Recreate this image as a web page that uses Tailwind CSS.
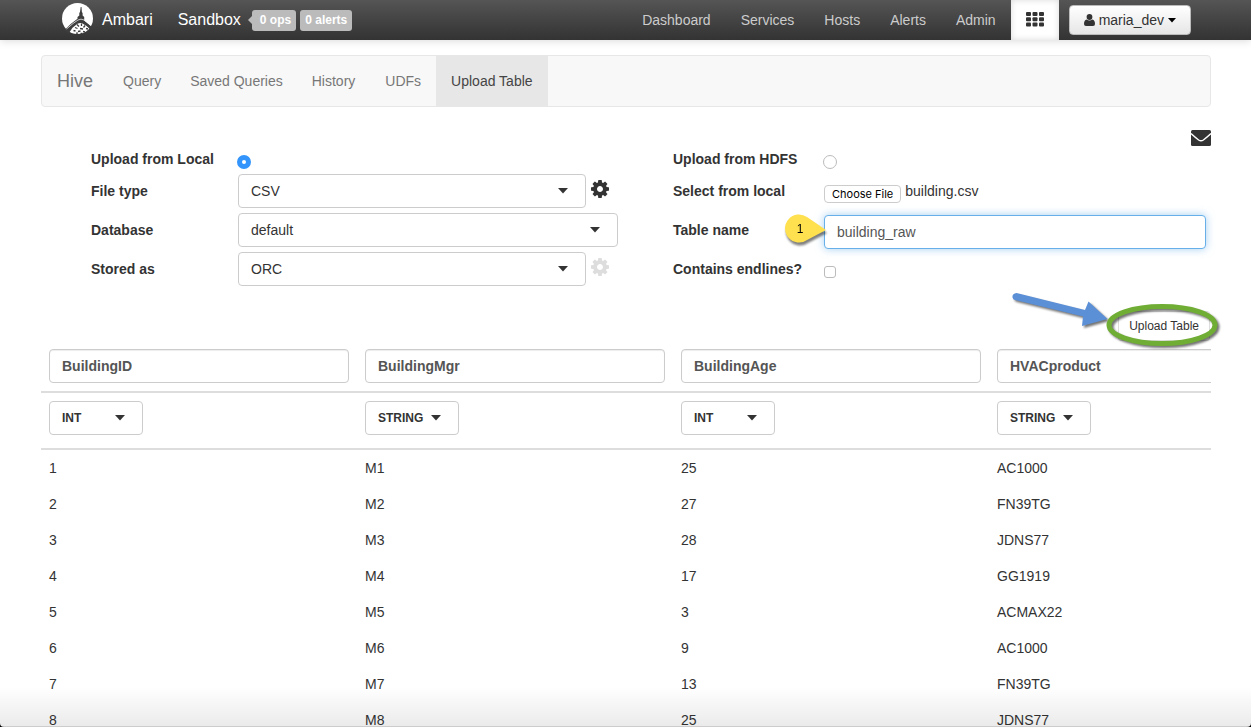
<!DOCTYPE html>
<html lang="en">
<head>
<meta charset="utf-8">
<meta name="viewport" content="width=device-width, initial-scale=1">
<title>Ambari - Hive - Upload Table</title>
<script src="https://cdn.jsdelivr.net/npm/@tailwindcss/browser@4"></script>
</head>
<body class="relative h-screen overflow-hidden bg-white font-['Liberation_Sans',Arial,sans-serif] text-sm leading-5 text-[#333]">
<svg class="hidden" aria-hidden="true">
  <symbol id="caret" viewBox="0 0 10 6"><path d="M0 0h10L5 5.5z" fill="currentColor"/></symbol>
  <symbol id="gear" viewBox="0 0 1536 1536"><path fill="currentColor" d="M1024 768q0-106-75-181t-181-75-181 75-75 181 75 181 181 75 181-75 75-181zm512-109v222q0 12-8 23t-20 13l-185 28q-19 54-39 91 35 50 107 138 10 12 10 25t-9 23q-27 37-99 108t-94 71q-12 0-26-9l-138-108q-44 23-91 38-16 136-29 186-7 28-36 28H657q-14 0-24.500-8.500T621 1506l-28-184q-49-16-90-37l-141 107q-10 9-25 9-14 0-25-11-126-114-165-168-7-10-7-23 0-12 8-23 15-21 51-66.500t54-70.500q-27-50-41-99L29 913q-13-2-21-12.500T0 877V655q0-12 8-23t19-13l186-28q14-46 39-92-40-57-107-138-10-12-10-24 0-10 9-23 26-36 98.500-107.500T337 135q13 0 26 10l138 107q44-23 91-38 16-136 29-186 7-28 36-28h222q14 0 24.500 8.500T915 30l28 184q49 16 90 37l142-107q9-9 24-9 13 0 25 10 129 119 165 170 7 8 7 22 0 12-8 23-15 21-51 66.500t-54 70.500q26 50 41 98l183 28q13 2 21 12.500t8 23.500z"/></symbol>
</svg>

<header class="flex h-10 items-center bg-linear-to-b from-[#555] to-[#333] pr-[60px] pl-[62px] shadow-[0_1px_8px_rgba(0,0,0,0.15)]">
  <a href="#" class="flex items-center gap-[9px] text-base text-white">
    <svg class="-mt-1 size-[31px]" viewBox="0 0 31 31" aria-hidden="true">
      <circle cx="15.500" cy="15.500" r="15.500" fill="#fff"/>
      <path fill="#3d3d3d" d="M18.700 4h.8l.4 5 .7 1v2.500l1.600 1.500v3.500l3 2.500 5 4.200-1.200 2.800-4.800-4.300-4.200-2.400q-2-.8-4.500.5l-5 4-4 6-4-3.800 6.500-6.200 6.500-5V14l1.800-1.500V10l.7-1z"/>
      <path d="M4.500 26l6.500-5.500 5-3.500q3-1.700 6 0l6.500 5" fill="none" stroke="#fff" stroke-width=".7"/>
      <g fill="none" stroke="#3d3d3d" stroke-width="1.300">
        <path d="M15 21.500l2 2M19.500 20.500v2.500M23 22.500l-1.500 2M13 24.500l2.500 1M18 25.500l3 .5M24 25.500l2 .5M11.500 27.500l2 .5M16 28.500l2.500-.5M21 28.500l2 .5M14 30.200h2M18.500 30.500h2"/>
      </g>
    </svg>
    Ambari
  </a>
  <a href="#" class="ml-[25px] text-base text-white">Sandbox</a>
  <div class="ml-[7px] flex items-center gap-1 text-xs leading-5 font-bold text-white">
    <a href="#" class="flex items-center">
      <svg class="h-2 w-1" viewBox="0 0 4 8" aria-hidden="true"><path d="M4 0v8L0 4z" fill="#bbb"/></svg>
      <span class="h-[21px] rounded-[3px] bg-[#bbb] pr-[5px] pl-2">0 ops</span>
    </a>
    <a href="#" class="h-[21px] rounded-[3px] bg-[#bbb] px-[5px]">0 alerts</a>
  </div>
  <nav class="ml-auto flex items-center gap-[30px] text-[#ccc]">
    <a href="#">Dashboard</a>
    <a href="#">Services</a>
    <a href="#">Hosts</a>
    <a href="#">Alerts</a>
    <a href="#">Admin</a>
  </nav>
  <button type="button" aria-label="Views" class="ml-[15px] flex h-10 w-12 justify-center bg-white pt-3 text-[#333] shadow-[inset_0_0_6px_rgba(0,0,0,0.15)]">
    <svg class="h-[15px] w-[18px]" viewBox="0 0 18 15" fill="currentColor" aria-hidden="true">
      <rect width="5" height="4" rx="1"/><rect x="6.500" width="5" height="4" rx="1"/><rect x="13" width="5" height="4" rx="1"/>
      <rect y="5.300" width="5" height="4" rx="1"/><rect x="6.500" y="5.300" width="5" height="4" rx="1"/><rect x="13" y="5.300" width="5" height="4" rx="1"/>
      <rect y="10.600" width="5" height="4" rx="1"/><rect x="6.500" y="10.600" width="5" height="4" rx="1"/><rect x="13" y="10.600" width="5" height="4" rx="1"/>
    </svg>
  </button>
  <button type="button" class="ml-2.5 flex h-[30px] items-center rounded border border-[#bbb] bg-linear-to-b from-white to-[#e6e6e6] px-3.5">
    <svg class="mr-1 h-3 w-[11px]" viewBox="0 0 11 12" fill="currentColor" aria-hidden="true"><circle cx="5.500" cy="3" r="2.900"/><path d="M2.600 5.500q2.900 2.200 5.800 0Q11 6.200 11 10q0 2-2 2H2q-2 0-2-2 0-3.800 2.600-4.500z"/></svg>
    maria_dev
    <svg class="ml-1 h-[5px] w-2 text-black" viewBox="0 0 10 6" aria-hidden="true"><use href="#caret"/></svg>
  </button>
</header>

<main class="pt-[15px] pr-10 pl-[41px]">
  <nav class="flex h-[52px] items-stretch rounded border border-[#e7e7e7] bg-[#f8f8f8] text-[#777]">
    <a href="#" class="flex items-center px-[15px] text-lg">Hive</a>
    <a href="#" class="flex items-center pr-3.5 pl-[15px]">Query</a>
    <a href="#" class="flex items-center pr-3.5 pl-[15px]">Saved Queries</a>
    <a href="#" class="flex items-center px-[15px]">History</a>
    <a href="#" class="flex items-center px-[15px]">UDFs</a>
    <a href="#" aria-current="page" class="flex items-center bg-[#e7e7e7] px-[15px] text-[#444]">Upload Table</a>
  </nav>

  <div class="flex h-[42px] items-start justify-end pt-[23px]">
    <button type="button" aria-label="Messages">
      <svg class="h-4 w-5" viewBox="0 0 21 16" preserveAspectRatio="none" aria-hidden="true"><rect width="21" height="16" rx="1.500" fill="#333"/><path d="M0 3.500q4 3.500 8 6.500 2.500 1.700 5 0 4-3 8-6.500" fill="none" stroke="#fff" stroke-width="1.500"/></svg>
    </button>
  </div>

  <form onsubmit="return false">
    <div class="grid grid-cols-2 gap-[49px] pr-[5px] pl-[50px]">
      <div class="grid auto-rows-[34px] grid-cols-[147px_1fr] grid-rows-[20px] items-center gap-y-[5px] pr-1.5">
        <label for="src-local" class="font-bold">Upload from Local</label>
        <div class="flex pt-1.5"><input id="src-local" type="radio" name="source" checked class="-ml-px size-3.5 appearance-none rounded-full border border-[#bbb] bg-white checked:border-5 checked:border-[#3395fb]"></div>
        <label for="file-type" class="font-bold">File type</label>
        <div class="flex items-center gap-[5px]">
          <div class="relative flex-1">
            <select id="file-type" class="block h-[34px] w-full appearance-none rounded border border-[#ccc] bg-white px-3"><option>CSV</option></select>
            <svg class="pointer-events-none absolute top-3.5 right-[18px] h-1.5 w-2.5" aria-hidden="true"><use href="#caret"/></svg>
          </div>
          <button type="button" aria-label="File type settings" class="mr-[9px] pb-1"><svg class="size-[18px]" aria-hidden="true"><use href="#gear"/></svg></button>
        </div>
        <label for="database" class="font-bold">Database</label>
        <div class="relative">
          <select id="database" class="block h-[34px] w-full appearance-none rounded border border-[#ccc] bg-white px-3"><option>default</option></select>
          <svg class="pointer-events-none absolute top-3.5 right-[18px] h-1.5 w-2.5" aria-hidden="true"><use href="#caret"/></svg>
        </div>
        <label for="stored-as" class="font-bold">Stored as</label>
        <div class="flex items-center gap-[5px]">
          <div class="relative flex-1">
            <select id="stored-as" class="block h-[34px] w-full appearance-none rounded border border-[#ccc] bg-white px-3"><option>ORC</option></select>
            <svg class="pointer-events-none absolute top-3.5 right-[18px] h-1.5 w-2.5" aria-hidden="true"><use href="#caret"/></svg>
          </div>
          <button type="button" disabled aria-label="Storage settings" class="mr-[9px] pb-1 text-[#ddd]"><svg class="size-[18px]" aria-hidden="true"><use href="#gear"/></svg></button>
        </div>
      </div>

      <div class="grid auto-rows-[34px] grid-cols-[151px_1fr] grid-rows-[20px] items-center gap-y-[5px]">
        <label for="src-hdfs" class="font-bold">Upload from HDFS</label>
        <div class="flex pt-1.5"><input id="src-hdfs" type="radio" name="source" class="-ml-px size-3.5 appearance-none rounded-full border border-[#bbb] bg-white"></div>
        <label for="choose-file" class="font-bold">Select from local</label>
        <div class="flex items-center gap-1">
          <button id="choose-file" type="button" class="mt-1.5 h-[18px] rounded border border-[#ccc] bg-white px-[7px] font-[Inter,sans-serif] text-[11px] leading-4 text-black">Choose File</button>
          <span>building.csv</span>
        </div>
        <label for="table-name" class="font-bold">Table name</label>
        <div class="relative pt-1">
          <input id="table-name" type="text" value="building_raw" class="block h-[34px] w-full rounded border border-[#66afe9] bg-white px-3 text-[#555] shadow-[0_0_8px_rgba(102,175,233,0.6)] outline-none">
          <svg class="absolute top-0 -left-11 h-9 w-12 overflow-visible drop-shadow-[1px_3px_1px_rgba(0,0,0,0.5)]" viewBox="0 0 48 36" aria-hidden="true">
            <path d="M46 19L27 29A14 14 0 1 1 27 6z" fill="#ffe04f"/>
            <text x="20" y="22" text-anchor="middle" font-size="12" fill="#000">1</text>
          </svg>
        </div>
        <label for="endlines" class="font-bold">Contains endlines?</label>
        <div class="flex pt-1.5"><input id="endlines" type="checkbox" class="size-3 appearance-none rounded-[3px] border border-[#bbb] bg-white"></div>
      </div>
    </div>

    <div class="flex justify-end pt-[25px] pr-px">
      <div class="relative">
        <button type="submit" class="block h-[30px] rounded-[3px] border border-[#ddd] bg-white px-2.5 text-xs">Upload Table</button>
        <svg class="pointer-events-none absolute -top-[21px] -right-[15px] h-[65px] w-[215px] drop-shadow-[2px_2px_1px_rgba(0,0,0,0.55)]" viewBox="0 0 215 65" aria-hidden="true">
          <path d="M6.500 3Q2 3.500 2.500 7.500 3 9.500 5 10L73 26.500 72 36 97.500 29 78.500 11.500 75 20z" fill="#5b8fd6"/>
          <ellipse cx="152" cy="35" rx="53" ry="18.500" fill="none" stroke="#70ad35" stroke-width="5"/>
        </svg>
      </div>
    </div>
  </form>

  <div class="overflow-hidden">
    <table class="w-[1264px] table-fixed border-collapse text-left">
      <thead>
        <tr class="h-[51px] align-top">
          <th class="px-2 pt-2"><input aria-label="Column 1 name" value="BuildingID" class="block h-[34px] w-full rounded border border-[#ccc] px-3 font-bold text-[#555] shadow-[inset_0_1px_1px_rgba(0,0,0,0.075)]"></th>
          <th class="px-2 pt-2"><input aria-label="Column 2 name" value="BuildingMgr" class="block h-[34px] w-full rounded border border-[#ccc] px-3 font-bold text-[#555] shadow-[inset_0_1px_1px_rgba(0,0,0,0.075)]"></th>
          <th class="px-2 pt-2"><input aria-label="Column 3 name" value="BuildingAge" class="block h-[34px] w-full rounded border border-[#ccc] px-3 font-bold text-[#555] shadow-[inset_0_1px_1px_rgba(0,0,0,0.075)]"></th>
          <th class="px-2 pt-2"><input aria-label="Column 4 name" value="HVACproduct" class="block h-[34px] w-full rounded border border-[#ccc] px-3 font-bold text-[#555] shadow-[inset_0_1px_1px_rgba(0,0,0,0.075)]"></th>
        </tr>
        <tr class="h-[57px] border-y-2 border-[#ddd] align-top text-xs">
          <th class="px-2 pt-2"><div class="relative w-[94px]"><select aria-label="Column 1 type" class="block h-[34px] w-full appearance-none rounded border border-[#ccc] bg-white px-3 font-bold"><option>INT</option></select><svg class="pointer-events-none absolute top-3.5 right-[18px] h-1.5 w-2.5" aria-hidden="true"><use href="#caret"/></svg></div></th>
          <th class="px-2 pt-2"><div class="relative w-[94px]"><select aria-label="Column 2 type" class="block h-[34px] w-full appearance-none rounded border border-[#ccc] bg-white px-3 font-bold"><option>STRING</option></select><svg class="pointer-events-none absolute top-3.5 right-[18px] h-1.5 w-2.5" aria-hidden="true"><use href="#caret"/></svg></div></th>
          <th class="px-2 pt-2"><div class="relative w-[94px]"><select aria-label="Column 3 type" class="block h-[34px] w-full appearance-none rounded border border-[#ccc] bg-white px-3 font-bold"><option>INT</option></select><svg class="pointer-events-none absolute top-3.5 right-[18px] h-1.5 w-2.5" aria-hidden="true"><use href="#caret"/></svg></div></th>
          <th class="px-2 pt-2"><div class="relative w-[94px]"><select aria-label="Column 4 type" class="block h-[34px] w-full appearance-none rounded border border-[#ccc] bg-white px-3 font-bold"><option>STRING</option></select><svg class="pointer-events-none absolute top-3.5 right-[18px] h-1.5 w-2.5" aria-hidden="true"><use href="#caret"/></svg></div></th>
        </tr>
      </thead>
      <tbody class="[&_td]:p-2">
        <tr><td>1</td><td>M1</td><td>25</td><td>AC1000</td></tr>
        <tr><td>2</td><td>M2</td><td>27</td><td>FN39TG</td></tr>
        <tr><td>3</td><td>M3</td><td>28</td><td>JDNS77</td></tr>
        <tr><td>4</td><td>M4</td><td>17</td><td>GG1919</td></tr>
        <tr><td>5</td><td>M5</td><td>3</td><td>ACMAX22</td></tr>
        <tr><td>6</td><td>M6</td><td>9</td><td>AC1000</td></tr>
        <tr><td>7</td><td>M7</td><td>13</td><td>FN39TG</td></tr>
        <tr><td>8</td><td>M8</td><td>25</td><td>JDNS77</td></tr>
      </tbody>
    </table>
  </div>
</main>

<!-- Shade and rounded corners along the window's bottom edge -->
<div class="pointer-events-none absolute inset-x-0 bottom-0 h-10 border-b border-black/20 bg-linear-to-b from-transparent to-black/8"></div>
<svg class="pointer-events-none absolute bottom-0 left-0 size-1" viewBox="0 0 4 4" aria-hidden="true"><path d="M0 0Q0 4 4 4H0z"/></svg>
<svg class="pointer-events-none absolute right-0 bottom-0 size-1" viewBox="0 0 4 4" aria-hidden="true"><path d="M4 0Q4 4 0 4h4z"/></svg>
</body>
</html>
